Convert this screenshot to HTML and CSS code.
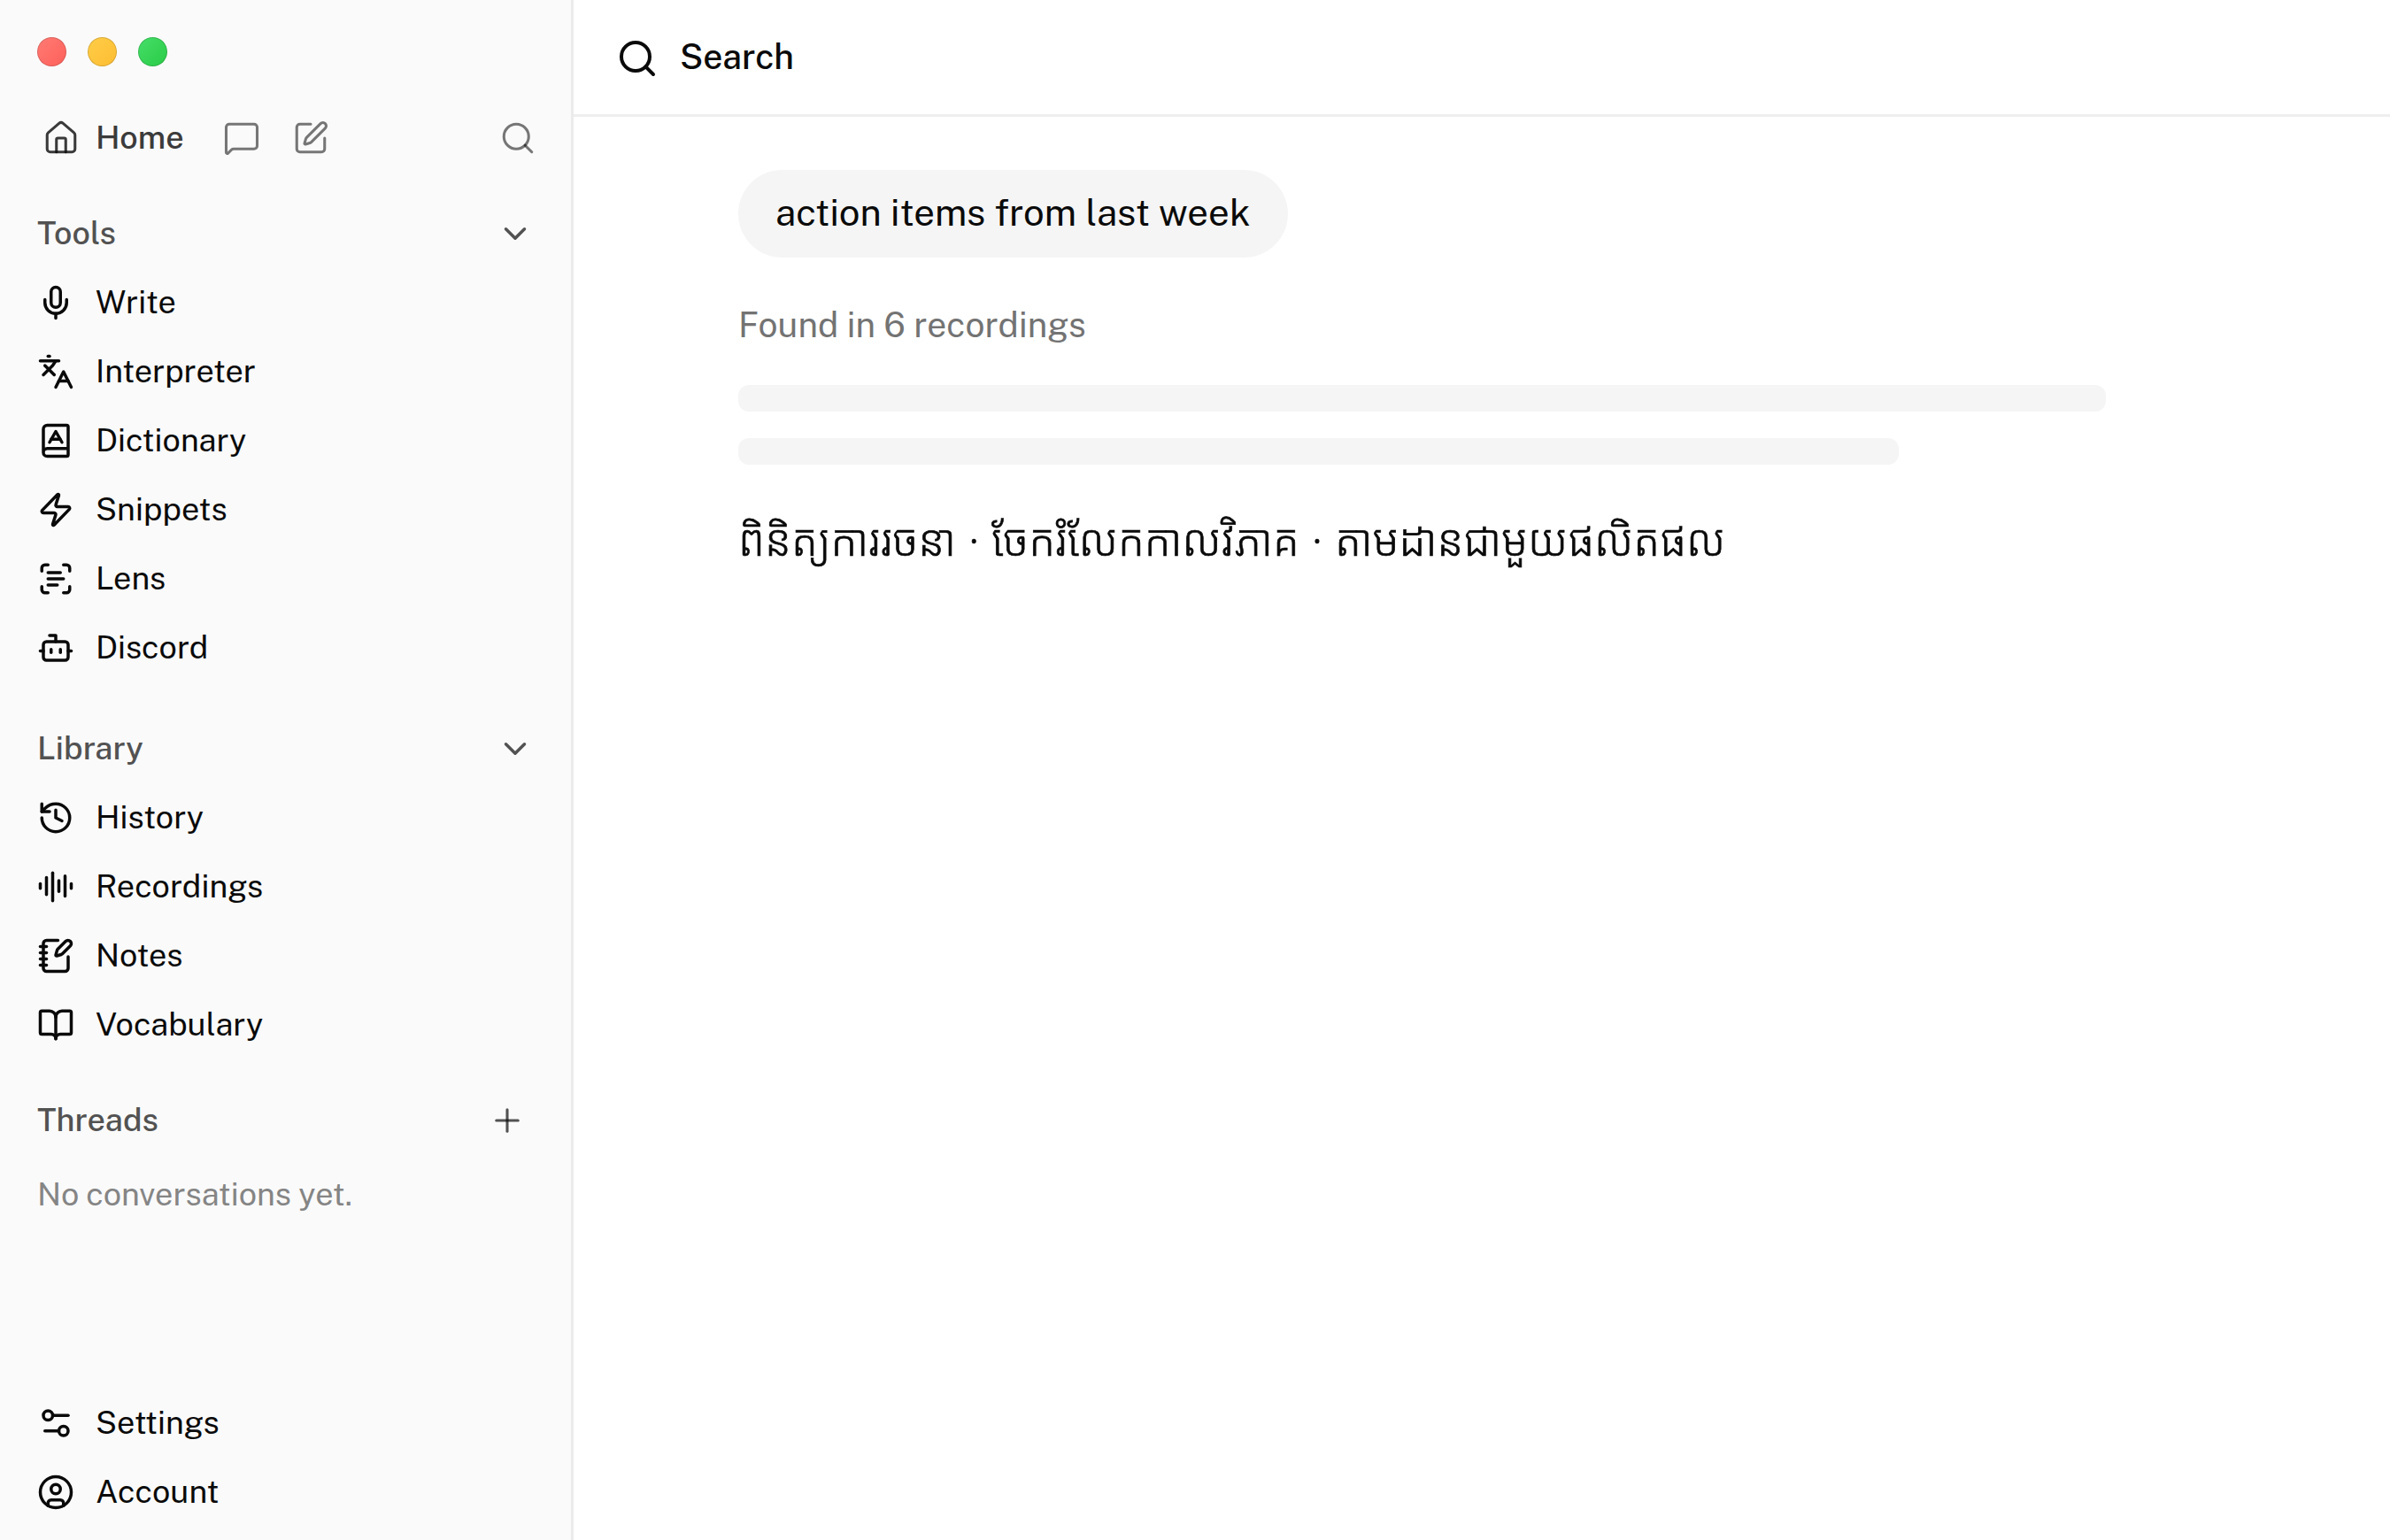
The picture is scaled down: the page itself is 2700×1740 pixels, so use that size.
FILE: index.html
```html
<!DOCTYPE html>
<html>
	<head>
		<meta charset="utf-8">
		<title>Search</title>
		<link rel="stylesheet" href="styles.css">
	</head>
	<body>
		<div class="sidebar">
			<!-- 窗口按钮 -->
			<div class="lights">
				<span class="light red"></span>
				<span class="light yellow"></span>
				<span class="light green"></span>
			</div>

			<div class="topbar">
				<a class="home">
					<svg class="icon" viewBox="0 0 24 24"><path d="M15 21v-8a1 1 0 0 0-1-1h-4a1 1 0 0 0-1 1v8"/><path d="M3 10a2 2 0 0 1 .709-1.528l7-6a2 2 0 0 1 2.582 0l7 6A2 2 0 0 1 21 10v9a2 2 0 0 1-2 2H5a2 2 0 0 1-2-2z"/></svg>
					<span>Home</span>
				</a>
				<svg class="icon chat" viewBox="0 0 24 24"><path d="M22 17a2 2 0 0 1-2 2H6.828a2 2 0 0 0-1.414.586l-2.202 2.202A.71.71 0 0 1 2 21.286V5a2 2 0 0 1 2-2h16a2 2 0 0 1 2 2z"/></svg>
				<svg class="icon compose" viewBox="0 0 24 24"><path d="M12 3H5a2 2 0 0 0-2 2v14a2 2 0 0 0 2 2h14a2 2 0 0 0 2-2v-7"/><path d="M18.375 2.625a1 1 0 0 1 3 3l-9.013 9.014a2 2 0 0 1-.853.505l-2.873.84a.5.5 0 0 1-.62-.62l.84-2.873a2 2 0 0 1 .506-.852z"/></svg>
				<svg class="icon find" viewBox="0 0 24 24"><circle cx="11" cy="11" r="8"/><path d="m21 21-4.3-4.3"/></svg>
			</div>

			<div class="group">
				<div class="title">
					<span>Tools</span>
					<svg class="icon" viewBox="0 0 24 24"><path d="m6 9 6 6 6-6"/></svg>
				</div>
				<ul>
					<li><svg class="icon" viewBox="0 0 24 24"><path d="M12 19v3"/><path d="M19 10v2a7 7 0 0 1-14 0v-2"/><rect x="9" y="2" width="6" height="13" rx="3"/></svg><span>Write</span></li>
					<li><svg class="icon" viewBox="0 0 24 24"><path d="m5 8 6 6"/><path d="m4 14 6-6 2-3"/><path d="M2 5h12"/><path d="M7 2h1"/><path d="m22 22-5-10-5 10"/><path d="M14 18h6"/></svg><span>Interpreter</span></li>
					<li><svg class="icon" viewBox="0 0 24 24"><path d="M4 19.5v-15A2.5 2.5 0 0 1 6.5 2H19a1 1 0 0 1 1 1v18a1 1 0 0 1-1 1H6.5a1 1 0 0 1 0-5H20"/><path d="m8 13 4-7 4 7"/><path d="M9.1 11h5.7"/></svg><span>Dictionary</span></li>
					<li><svg class="icon" viewBox="0 0 24 24"><path d="M4 14a1 1 0 0 1-.78-1.63l9.9-10.2a.5.5 0 0 1 .86.46l-1.92 6.02A1 1 0 0 0 13 10h7a1 1 0 0 1 .78 1.63l-9.9 10.2a.5.5 0 0 1-.86-.46l1.92-6.02A1 1 0 0 0 11 14z"/></svg><span>Snippets</span></li>
					<li><svg class="icon" viewBox="0 0 24 24"><path d="M3 7V5a2 2 0 0 1 2-2h2"/><path d="M17 3h2a2 2 0 0 1 2 2v2"/><path d="M21 17v2a2 2 0 0 1-2 2h-2"/><path d="M7 21H5a2 2 0 0 1-2-2v-2"/><path d="M7 8h8"/><path d="M7 12h10"/><path d="M7 16h6"/></svg><span>Lens</span></li>
					<li><svg class="icon" viewBox="0 0 24 24"><path d="M12 8V4H8"/><rect x="4" y="8" width="16" height="12" rx="2"/><path d="M2 14h2"/><path d="M20 14h2"/><path d="M15 13v2"/><path d="M9 13v2"/></svg><span>Discord</span></li>
				</ul>
			</div>

			<div class="group library">
				<div class="title">
					<span>Library</span>
					<svg class="icon" viewBox="0 0 24 24"><path d="m6 9 6 6 6-6"/></svg>
				</div>
				<ul>
					<li><svg class="icon" viewBox="0 0 24 24"><path d="M3 12a9 9 0 1 0 9-9 9.75 9.75 0 0 0-6.74 2.74L3 8"/><path d="M3 3v5h5"/><path d="M12 7v5l4 2"/></svg><span>History</span></li>
					<li><svg class="icon" viewBox="0 0 24 24"><path d="M2 10v3"/><path d="M6 6v11"/><path d="M10 3v18"/><path d="M14 8v7"/><path d="M18 5v13"/><path d="M22 10v3"/></svg><span>Recordings</span></li>
					<li><svg class="icon" viewBox="0 0 24 24"><path d="M13.4 2H6a2 2 0 0 0-2 2v16a2 2 0 0 0 2 2h12a2 2 0 0 0 2-2v-7.4"/><path d="M2 6h4"/><path d="M2 10h4"/><path d="M2 14h4"/><path d="M2 18h4"/><path d="M21.378 5.626a1 1 0 1 0-3.004-3.004l-5.01 5.012a2 2 0 0 0-.506.854l-.837 2.87a.5.5 0 0 0 .62.62l2.87-.837a2 2 0 0 0 .854-.506z"/></svg><span>Notes</span></li>
					<li><svg class="icon" viewBox="0 0 24 24"><path d="M12 7v14"/><path d="M3 18a1 1 0 0 1-1-1V4a1 1 0 0 1 1-1h5a4 4 0 0 1 4 4 4 4 0 0 1 4-4h5a1 1 0 0 1 1 1v13a1 1 0 0 1-1 1h-6a3 3 0 0 0-3 3 3 3 0 0 0-3-3z"/></svg><span>Vocabulary</span></li>
				</ul>
			</div>

			<div class="group threads">
				<div class="title">
					<span>Threads</span>
					<svg class="icon plus" viewBox="0 0 24 24"><path d="M5 12h14"/><path d="M12 5v14"/></svg>
				</div>
				<p class="empty">No conversations yet.</p>
			</div>

			<ul class="bottom">
				<li><svg class="icon" viewBox="0 0 24 24"><path d="M20 7h-9"/><path d="M14 17H5"/><circle cx="17" cy="17" r="3"/><circle cx="7" cy="7" r="3"/></svg><span>Settings</span></li>
				<li><svg class="icon" viewBox="0 0 24 24"><circle cx="12" cy="12" r="10"/><circle cx="12" cy="10" r="3"/><path d="M7 20.662V19a2 2 0 0 1 2-2h6a2 2 0 0 1 2 2v1.662"/></svg><span>Account</span></li>
			</ul>
		</div>

		<div class="main">
			<div class="header">
				<svg class="icon" viewBox="0 0 24 24"><circle cx="11" cy="11" r="8"/><path d="m21 21-4.3-4.3"/></svg>
				<span>Search</span>
			</div>
			<div class="content">
				<div class="query">action items from last week</div>
				<p class="found">Found in 6 recordings</p>
				<!-- 占位条 -->
				<div class="bar"></div>
				<div class="bar short"></div>
				<p class="answer" lang="km">ពិនិត្យការរចនា · ចែករំលែកកាលវិភាគ · តាមដានជាមួយផលិតផល</p>
			</div>
		</div>
	</body>
</html>
```

FILE: styles.css
```css
*{
	margin: 0;
	padding: 0;
	box-sizing: border-box;
}
body{
	display: flex;
	width: 2700px;
	height: 1740px;
	overflow: hidden;
	background-color: #fff;
	color: #0a0a0a;
	font-family: "Public Sans", Inter, sans-serif;
	font-size: 36px;
}
ul{
	list-style: none;
}
.icon{
	flex: none;
	width: 42px;
	height: 42px;
	fill: none;
	stroke: #0a0a0a;
	stroke-width: 2;
	stroke-linecap: round;
	stroke-linejoin: round;
}

/* 侧边栏 */
.sidebar{
	display: flex;
	flex-direction: column;
	width: 648px;
	height: 1740px;
	padding: 42px 42px 15px;
	border-right: 3px solid #ebebeb;
	background-color: #fafafa;
}
/* 文字比图标中线略高一点 */
.sidebar .icon + span, .title span{
	padding-bottom: 2px;
}
.lights{
	display: flex;
	gap: 24px;
	height: 33px;
}
.light{
	width: 33px;
	height: 33px;
	border: 1px solid rgba(0,0,0,0.15);
	border-radius: 50%;
}
.red{
	background: linear-gradient(135deg, #ff7b74, #ff605a) border-box;
}
.yellow{
	background: linear-gradient(135deg, #ffcd48, #fdbd32) border-box;
}
.green{
	background: linear-gradient(135deg, #45de69, #2acb46) border-box;
}
.topbar{
	display: flex;
	align-items: center;
	height: 78px;
	margin-top: 42px;
}
.home{
	display: flex;
	align-items: center;
	gap: 18px;
	width: 210px;
	padding-left: 6px;
	color: #3b3b3b;
	font-weight: 500;
}
.topbar .icon{
	stroke: rgba(10,10,10,0.55);
	stroke-width: 1.75;
}
.topbar .home .icon{
	stroke: rgba(10,10,10,0.8);
}
.compose{
	margin-left: 36px;
}
.find{
	margin-left: auto;
	margin-right: -3px;
}
.group{
	margin-top: 30px;
}
.library{
	margin-top: 36px;
}
.title{
	display: flex;
	align-items: center;
	justify-content: space-between;
	height: 78px;
	color: #525252;
	font-weight: 500;
}
.title .icon{
	stroke: rgba(10,10,10,0.7);
}
.title .plus{
	margin-right: 9px;
	stroke-width: 1.75;
}
li{
	display: flex;
	align-items: center;
	gap: 24px;
	height: 78px;
}
.empty{
	height: 90px;
	line-height: 88px;
	color: #858585;
}
.bottom{
	margin-top: auto;
}

/* 主区域 */
.main{
	flex: 1;
}
.header{
	display: flex;
	align-items: center;
	gap: 24px;
	height: 132px;
	padding: 3px 0 0 48px;
	border-bottom: 3px solid #efefef;
	font-size: 39px;
	font-weight: 500;
}
.header span{
	padding-bottom: 5px;
}
.header .icon{
	width: 48px;
	height: 48px;
}
.content{
	width: 1545px;
	margin: 60px 0 0 186px;
}
.query{
	width: 621px;
	height: 99px;
	padding-left: 42px;
	border-radius: 50px;
	background-color: #f5f5f5;
	font-size: 42px;
	line-height: 96px;
	white-space: nowrap;
}
.found{
	height: 60px;
	margin-top: 46px;
	color: #737373;
	font-size: 39px;
	line-height: 60px;
}
.bar{
	height: 30px;
	margin-top: 38px;
	border-radius: 12px;
	background-color: #f5f5f5;
}
.short{
	width: 1311px;
	margin-top: 30px;
}
.answer{
	margin-top: 48px;
	font-family: "Noto Sans Khmer", "Kantumruy Pro", sans-serif;
	font-size: 48.7px;
	font-weight: 300;
	line-height: 72px;
	word-spacing: 1.5px;
	white-space: nowrap;
	/* 细体稍微加粗 */
	-webkit-text-stroke: 0.7px #0a0a0a;
}
```
